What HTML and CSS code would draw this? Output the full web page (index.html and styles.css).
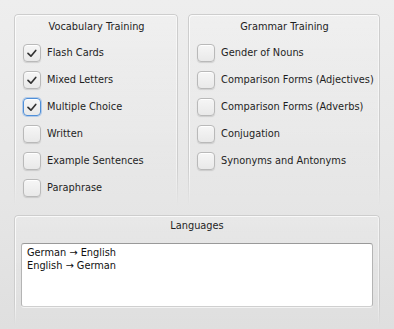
FILE: index.html
```html
<!DOCTYPE html>
<html>
<head>
<meta charset="utf-8">
<link rel="stylesheet" href="styles.css">
</head>
<body>
<div class="window">
  <div class="top">
    <div class="group vocab">
      <div class="title">Vocabulary Training</div>
      <div class="rows">
        <label class="row"><span class="cb checked"><svg viewBox="0 0 18 18"><path d="M4.5 9.5 L7.8 12.6 L13.2 6.2"/></svg></span>Flash Cards</label>
        <label class="row"><span class="cb checked"><svg viewBox="0 0 18 18"><path d="M4.5 9.5 L7.8 12.6 L13.2 6.2"/></svg></span>Mixed Letters</label>
        <label class="row"><span class="cb checked focus"><svg viewBox="0 0 18 18"><path d="M4.5 9.5 L7.8 12.6 L13.2 6.2"/></svg></span>Multiple Choice</label>
        <label class="row"><span class="cb"></span>Written</label>
        <label class="row"><span class="cb"></span>Example Sentences</label>
        <label class="row"><span class="cb"></span>Paraphrase</label>
      </div>
    </div>
    <div class="group grammar">
      <div class="title">Grammar Training</div>
      <div class="rows">
        <label class="row"><span class="cb"></span>Gender of Nouns</label>
        <label class="row"><span class="cb"></span>Comparison Forms (Adjectives)</label>
        <label class="row"><span class="cb"></span>Comparison Forms (Adverbs)</label>
        <label class="row"><span class="cb"></span>Conjugation</label>
        <label class="row"><span class="cb"></span>Synonyms and Antonyms</label>
      </div>
    </div>
  </div>
  <div class="group langs">
    <div class="title">Languages</div>
    <div class="list">
      <div class="item">German → English</div>
      <div class="item">English → German</div>
    </div>
  </div>
</div>
</body>
</html>
```
FILE: styles.css
```css
html, body {
  margin: 0;
  padding: 0;
}
body {
  width: 394px;
  height: 329px;
  overflow: hidden;
  background: linear-gradient(to bottom, #eeeeee 0%, #e6e6e6 60%, #dfdfdf 100%);
  font-family: "DejaVu Sans", sans-serif;
  font-size: 9.8px;
  color: #1e1e1e;
}
.window {
  padding: 14px 14px 0 14px;
  display: flex;
  flex-direction: column;
  gap: 10px;
}
.top {
  display: flex;
  gap: 10px;
}
.group {
  position: relative;
  box-sizing: border-box;
  padding-top: 1px;
  padding-left: 1px;
}
.group::before {
  content: "";
  position: absolute;
  inset: 0;
  border: 1px solid #cdcdcd;
  border-bottom: none;
  border-radius: 4px 4px 0 0;
  box-shadow: inset 1px 1px 0 rgba(255,255,255,0.75), inset -1px 0 0 rgba(255,255,255,0.5);
  background: linear-gradient(to bottom, rgba(255,255,255,0.12), rgba(255,255,255,0));
  -webkit-mask-image: linear-gradient(to bottom, #000 0%, #000 80%, transparent 100%);
  mask-image: linear-gradient(to bottom, #000 0%, #000 80%, transparent 100%);
  pointer-events: none;
}
.vocab {
  width: 165px;
  height: 191px;
}
.grammar {
  width: 193px;
  height: 191px;
}
.title {
  position: relative;
  text-align: center;
  line-height: 14px;
  margin-top: 5px;
  margin-bottom: 10px;
}
.rows {
  position: relative;
  display: flex;
  flex-direction: column;
  gap: 9px;
  padding-left: 8px;
}
.row {
  display: flex;
  align-items: center;
  gap: 6px;
  height: 18px;
  line-height: 18px;
  white-space: nowrap;
}
.cb {
  box-sizing: border-box;
  width: 18px;
  height: 18px;
  flex: none;
  border: 1px solid #b9b9b9;
  border-radius: 4px;
  background: linear-gradient(to bottom, #f6f6f6, #e9e9e9);
  box-shadow: 0 1px 1px rgba(0,0,0,0.12), inset 0 1px 0 #ffffff;
  display: flex;
}
.cb.focus {
  border: 1px solid #4f8fd8;
  box-shadow: 0 0 0 1px rgba(110,165,230,0.45), inset 0 1px 0 #ffffff;
}
.cb svg {
  width: 16px;
  height: 16px;
  margin: 0;
}
.cb path {
  fill: none;
  stroke: #333333;
  stroke-width: 1.9;
  stroke-linecap: round;
  stroke-linejoin: round;
}
.langs {
  width: 366px;
  height: 110px;
  padding: 1px 7px 0 7px;
}
.langs .title {
  margin-top: 3px;
  margin-bottom: 10px;
}
.list {
  position: relative;
  box-sizing: border-box;
  height: 64px;
  background: #ffffff;
  border: 1px solid #b4b4b4;
  border-top-color: #999999;
  border-bottom-color: #cfcfcf;
  border-radius: 3px;
  padding: 2px 5px;
  box-shadow: 0 1px 0 rgba(255,255,255,0.6);
}
.item {
  line-height: 13px;
  color: #111111;
}
```
